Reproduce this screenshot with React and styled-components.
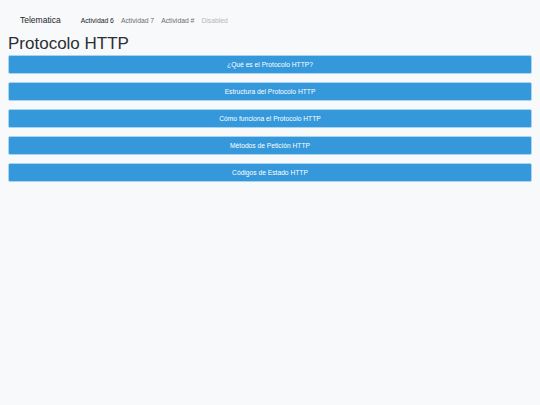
import React from 'react';
import styled, { createGlobalStyle } from 'styled-components';

const GlobalStyle = createGlobalStyle`
  html, body {
    margin: 0;
    padding: 0;
    background: #f8f9fa;
    font-family: "Liberation Sans", Arial, sans-serif;
  }
`;

const topics = [
  '¿Qué es el Protocolo HTTP?',
  'Estructura del Protocolo HTTP',
  'Cómo funciona el Protocolo HTTP',
  'Métodos de Petición HTTP',
  'Códigos de Estado HTTP',
];

const App = () => {
  return (
    <Page>
      <GlobalStyle />
      <Navbar>
        <Brand>Telematica</Brand>
        <NavList>
          <NavLink active>Actividad 6</NavLink>
          <NavLink>Actividad 7</NavLink>
          <NavLink>Actividad #</NavLink>
          <NavLink disabled>Disabled</NavLink>
        </NavList>
      </Navbar>
      <Main>
        <Title>Protocolo HTTP</Title>
        <ButtonList>
          {topics.map((t) => (
            <TopicButton key={t}>{t}</TopicButton>
          ))}
        </ButtonList>
      </Main>
    </Page>
  );
};

const Page = styled.div`
  min-height: 405px;
  background: #f8f9fa;
`;

const Navbar = styled.nav`
  display: flex;
  align-items: center;
  height: 24px;
  padding: 8px 0 0 20px;
`;

const Brand = styled.a`
  font-size: 8.5px;
  color: #212529;
  margin-right: 20px;
`;

const NavList = styled.div`
  display: flex;
  gap: 7px;
`;

const NavLink = styled.a`
  font-size: 6.8px;
  color: ${(p) => (p.active ? '#212529' : p.disabled ? '#b5b8bb' : '#6c6f72')};
`;

const Main = styled.main`
  padding: 0 8px;
`;

const Title = styled.h1`
  margin: 0;
  font-size: 17px;
  font-weight: 400;
  line-height: 23px;
  color: #2b2f33;
`;

const ButtonList = styled.div`
  display: flex;
  flex-direction: column;
  gap: 8px;
`;

const TopicButton = styled.button`
  height: 19px;
  width: 100%;
  background: #3498db;
  border: 1px solid #a9d4f1;
  border-radius: 2px;
  color: #ffffff;
  font-family: "Liberation Sans", Arial, sans-serif;
  font-size: 6.7px;
  padding: 0;
`;

export default App;
